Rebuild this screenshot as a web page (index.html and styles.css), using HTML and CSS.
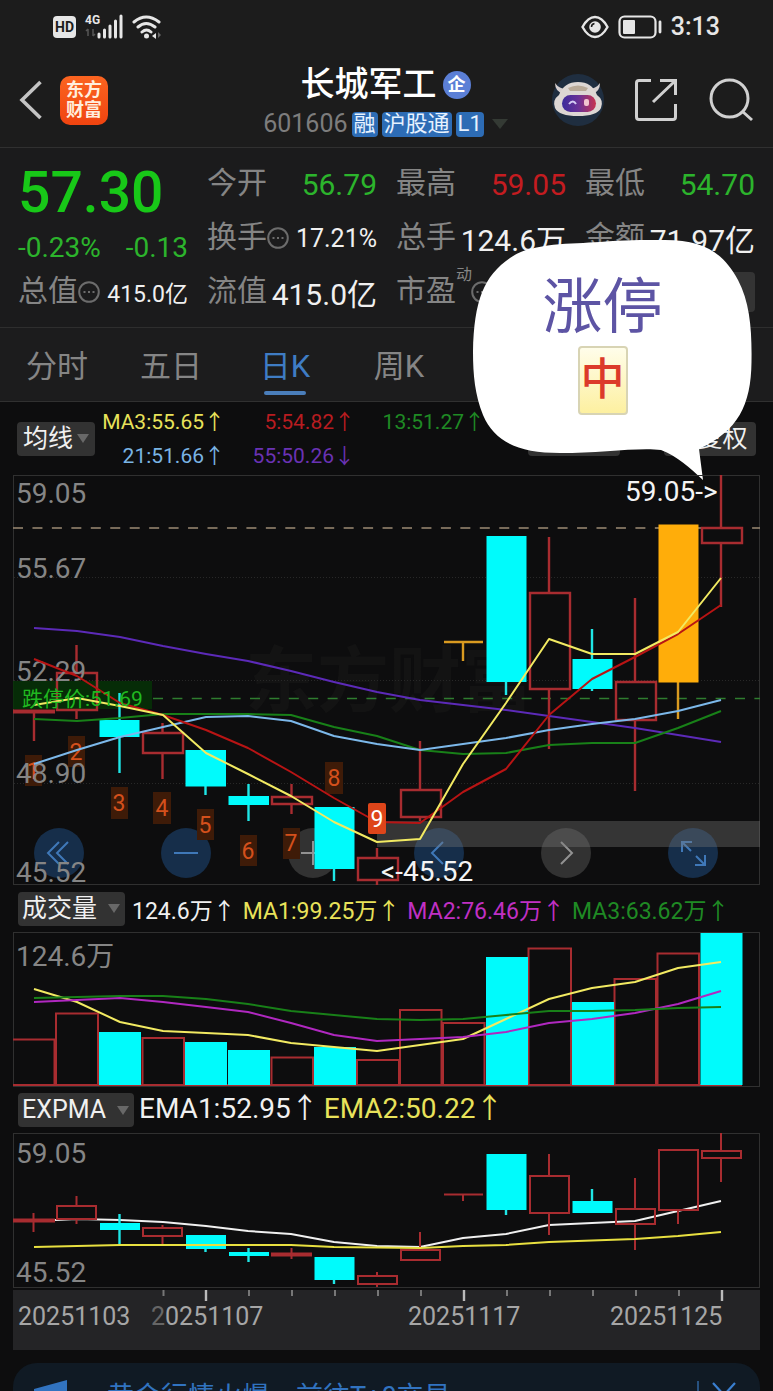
FILE: index.html
```html
<!DOCTYPE html>
<html lang="zh-CN">
<head>
<meta charset="utf-8">
<meta name="viewport" content="width=device-width, initial-scale=1">
<title>长城军工 601606</title>
<link rel="stylesheet" href="styles.css">
</head>
<body>
<div class="app">
  <div class="status">
    <div class="status-side">
      <span class="hd">HD</span>
      <svg width="42" height="30" viewBox="0 0 42 30" aria-hidden="true">
        <text x="1" y="12" class="net">4G</text>
        <path d="M4 17v7M2 19l2-2M9 17v7M11 22l-2 2" stroke="#555" stroke-width="1.500" fill="none"/>
        <path d="M15 22v3M20.500 18v7M26 14v11M31.500 9v16M37 4v21" stroke="#e6e6e6" stroke-width="3" stroke-linecap="round"/>
      </svg>
      <svg width="30" height="26" viewBox="0 0 30 26" fill="none" stroke="#e6e6e6" stroke-width="3" stroke-linecap="round" aria-hidden="true">
        <path d="M2 8Q14-2 27 8M6 13Q14 6 23 13M10 18Q14.500 14 19 18"/>
        <circle cx="14.500" cy="22" r="2.500" fill="#e6e6e6" stroke="none"/>
        <path d="M24 19v6l-4-3z" fill="#e6e6e6" stroke="none"/><path d="M26 18v6l3-3z" fill="#666" stroke="none"/>
      </svg>
    </div>
    <div class="status-side">
      <svg width="28" height="24" viewBox="0 0 28 24" fill="none" stroke="#e6e6e6" stroke-width="2.400" aria-hidden="true">
        <path d="M1.500 12Q7 2 14 2T26.500 12Q21 22 14 22T1.500 12Z"/><circle cx="14" cy="12" r="5.800" fill="#e6e6e6" stroke="none"/><path d="M10.500 12q0-3 3-3.500" stroke="#1c1c1c" stroke-width="1.500"/>
      </svg>
      <svg width="44" height="24" viewBox="0 0 44 24" fill="none" stroke="#e6e6e6" stroke-width="2.200" aria-hidden="true">
        <rect x="1.500" y="1.500" width="36" height="21" rx="5"/><rect x="5" y="5" width="12" height="14" rx="1" fill="#e6e6e6" stroke="none"/><path d="M42 7v10" stroke-width="2.800" stroke-linecap="round"/>
      </svg>
      <time class="clock">3:13</time>
    </div>
  </div>

  <header class="header">
    <div class="header-left">
      <button class="icon-btn" type="button" aria-label="返回">
        <svg width="24" height="40" viewBox="0 0 24 40" fill="none" stroke="#c4c4c4" stroke-width="3.600"><path d="M22.500 2L4 20l18.500 18"/></svg>
      </button>
      <a class="brand" href="#">东方<br>财富</a>
    </div>
    <div class="header-title">
      <h1>长城军工<span class="corp">企</span></h1>
      <p class="codes"><span class="code">601606</span><span class="tag">融</span><span class="tag">沪股通</span><span class="tag">L1</span><i class="caret caret-dim"></i></p>
    </div>
    <div class="header-right">
      <button class="icon-btn" type="button" aria-label="智能助手">
        <svg width="54" height="54" viewBox="0 0 54 54">
          <defs><linearGradient id="visor"><stop offset="0" stop-color="#3c2c9c"/><stop offset=".5" stop-color="#6b3196"/><stop offset="1" stop-color="#c83450"/></linearGradient></defs>
          <circle cx="27" cy="27" r="26" fill="#1f2e40"/>
          <path d="M4 10q0 9 9 11l3-5q-8 0-12-6zM49 10q0 9-8 11l-4-5q8 0 12-6z" fill="#d6cfcf"/>
          <path d="M8 22q5-13 19-13t19 13q7 5 4 13-4 8-23 8t-23-8q-3-8 4-13z" fill="#ddd7d4"/>
          <path d="M17 15q10-5 20 0l-2 3H19z" fill="#b9aa98"/>
          <rect x="11" y="22" width="34" height="17" rx="8.500" fill="url(#visor)"/>
          <path d="M18 31q4-5 7 0" fill="none" stroke="#d4ccf4" stroke-width="2"/><rect x="33" y="26" width="5" height="7" rx="2" fill="#f1c4cf"/>
        </svg>
      </button>
      <button class="icon-btn" type="button" aria-label="分享">
        <svg width="46" height="46" viewBox="0 0 46 46" fill="none" stroke="#d0d0d0" stroke-width="3"><path d="M18 3.500H6q-2.500 0-2.500 2.500v34q0 2.500 2.500 2.500h34q2.500 0 2.500-2.500V27M27 3.500h15.500V18M42 4L20 25"/></svg>
      </button>
      <button class="icon-btn" type="button" aria-label="搜索">
        <svg width="46" height="46" viewBox="0 0 46 46" fill="none" stroke="#d0d0d0" stroke-width="3"><circle cx="22.500" cy="21.500" r="18.500"/><path d="M35.500 34.500L45 43"/></svg>
      </button>
    </div>
  </header>

  <section class="quote" aria-label="行情">
    <div class="cell"><strong class="price">57.30</strong></div>
    <div class="cell"><span class="k">今开</span><span class="v down">56.79</span></div>
    <div class="cell"><span class="k">最高</span><span class="v up">59.05</span></div>
    <div class="cell"><span class="k">最低</span><span class="v down">54.70</span></div>

    <div class="cell change down"><span>-0.23%</span><span>-0.13</span></div>
    <div class="cell"><span class="k">换手</span><svg class="more" viewBox="0 0 22 22"><circle cx="11" cy="11" r="9.800"/><path d="M5.500 11h2M10 11h2M14.500 11h2"/></svg><span class="v v-mid">17.21%</span></div>
    <div class="cell"><span class="k">总手</span><span class="v">124.6万</span></div>
    <div class="cell"><span class="k">金额</span><span class="v">71.97亿</span></div>

    <div class="cell"><span class="k">总值</span><svg class="more" viewBox="0 0 22 22"><circle cx="11" cy="11" r="9.800"/><path d="M5.500 11h2M10 11h2M14.500 11h2"/></svg><span class="v v-small">415.0亿</span></div>
    <div class="cell"><span class="k">流值</span><span class="v">415.0亿</span></div>
    <div class="cell"><span class="k">市盈<sup>动</sup></span><svg class="more" viewBox="0 0 22 22"><circle cx="11" cy="11" r="9.800"/><path d="M5.500 11h2M10 11h2M14.500 11h2"/></svg></div>
    <div class="cell"><button class="expand" type="button" aria-label="展开更多"></button></div>
  </section>

  <nav class="tabs">
    <a href="#">分时</a><a href="#">五日</a><a class="active" href="#" aria-current="page">日K</a><a href="#">周K</a>
  </nav>

  <main class="charts">
    <div class="legend legend-ma">
      <button class="pick" type="button">均线<i class="caret"></i></button>
      <div class="ma">
        <span class="yellow">MA3:55.65↑</span><span class="red">5:54.82↑</span><span class="green">13:51.27↑</span>
        <span class="sky">21:51.66↑</span><span class="purple">55:50.26↓</span>
      </div>
      <div class="tools"><button class="pick tool" type="button" aria-label="画线"></button><button class="pick tool" type="button">前复权</button></div>
    </div>

    <div class="kline">
      <svg class="chart" viewBox="13 475 747 410" role="img" aria-label="日K线图">
        <rect class="frame" x="13.500" y="475.500" width="746" height="409"/>
        <text class="watermark" x="245" y="706">东方财富</text>
        <path class="grid" d="M14 577.500H760M14 680.500H760M14 783.500H760"/>
        <path d="M13 528H760" stroke="#9c8a74" stroke-width="1.600" stroke-dasharray="10 9.450"/>
        <rect x="13" y="681" width="139" height="28" fill="#063206" opacity=".85"/>
        <path d="M153 698.500H760" stroke="#2f7c2f" stroke-width="1.600" stroke-dasharray="10 9.400"/>
        <rect x="377" y="821" width="383" height="26" fill="#777" opacity=".38"/>
        <g class="badge">
          <rect x="25" y="755" width="17" height="31"/><rect x="68" y="736" width="17" height="31"/><rect x="111" y="787" width="17" height="32"/><rect x="153" y="792" width="18" height="32"/><rect x="197" y="809" width="17" height="31"/><rect x="240" y="835" width="17" height="31"/><rect x="283" y="828" width="17" height="31"/><rect x="325" y="762" width="18" height="32"/>
          <text x="33" y="779">1</text><text x="76" y="760">2</text><text x="119" y="811">3</text><text x="162" y="816">4</text><text x="205" y="833">5</text><text x="248" y="859">6</text><text x="291" y="851">7</text><text x="334" y="786">8</text>
        </g>
        <g class="hollow">
          <path d="M13 711.500H55" stroke-width="4"/>
          <path d="M34 712V741M76.500 645V673M76.500 710V719M162.500 723V733M162.500 753V779M291.500 784V796M291.500 805V814M377 848V858M377 880V885M420 741V789M420 817V821M549 537V593M549 690V749M635 598V682M635 720V791M721 475V527M721 543V607"/>
          <path d="M57 673h40v37H57zM143 733h40v20H143zM272 797h40v7H272zM358 858h40v22H358zM401 790h40v27H401zM530 593h40v96H530zM616 682h40v38H616zM702 528h40v15H702z"/>
        </g>
        <g class="solid"><path d="M119.500 693V773M205.500 786V795M248.500 784V821M334 868V881M506 681V695M592 629V691"/>
          <path class="body" d="M99.500 720h40v17h-40zM185.500 750h40.500v36.500h-40.500zM228.500 796h40.500v9h-40.500zM314.500 807h40v62h-40zM486.500 536h40v146h-40zM572.500 659h40v30h-40z"/></g>
        <path d="M444 642H483M463 642V661M678 682V719" stroke="#d99a20" stroke-width="2.400"/>
        <path d="M658.500 524.500h40v158h-40z" fill="#ffad0a"/>
        <g class="axis-label"><text x="16" y="503">59.05</text><text x="16" y="578">55.67</text><text x="16" y="681">52.29</text><text x="16" y="783">48.90</text><text x="16" y="882">45.52</text></g>
        <g class="lines">
          <polyline stroke="#5c2ab8" points="34,628 77,631 120,637 163,646 206,654 248,661 291,671 334,682 377,692 420,700 463,705 506,710 549,716 592,722 635,728 678,735 721,742"/>
          <polyline stroke="#188018" points="34,719 77,721 120,718 163,714 206,714 248,714 291,715 334,727 377,736 420,750 463,754 506,753 549,745 592,743 635,743 678,728 721,711"/>
          <polyline stroke="#7cb8ea" points="34,764 77,750 120,737 163,727 206,717 248,716 291,721 334,736 377,744 420,750 463,744 506,738 549,730 592,724 635,719 678,711 721,700"/>
          <polyline stroke="#b81414" points="34,659 77,676 120,703 163,715 206,730 248,748 291,772 334,798 377,822 420,823 463,792 506,769 549,715 592,679 635,657 678,634 721,605"/>
          <polyline stroke="#f2ea62" points="34,705 77,698 120,706 163,715 206,753 248,774 291,796 334,822 377,842 420,839 463,764 506,703 549,639 592,654 635,654 678,632 721,578"/>
        </g>
        <text class="limit" x="22" y="706">跌停价:51.69</text>
        <rect x="368" y="803" width="18" height="31" rx="2" fill="#de451a"/><text x="377" y="827" class="nine">9</text>
        <g class="peak"><text x="625" y="501">59.05-&gt;</text><text x="381" y="881">&lt;-45.52</text></g>
      </svg>
      <div class="controls">
        <button type="button" aria-label="最早"><svg viewBox="0 0 50 50"><path d="M25 14L14 25l11 11M34 14L23 25l11 11"/></svg></button>
        <button type="button" aria-label="缩小"><svg viewBox="0 0 50 50"><path d="M13 25H37"/></svg></button>
        <button type="button" class="gray" aria-label="放大"><svg viewBox="0 0 50 50"><path d="M13 25H37M25 13V37"/></svg></button>
        <button type="button" aria-label="向左"><svg viewBox="0 0 50 50"><path d="M29 14L18 25l11 11"/></svg></button>
        <button type="button" class="gray" aria-label="向右"><svg viewBox="0 0 50 50"><path d="M20 14L31 25 20 36"/></svg></button>
        <button type="button" aria-label="全屏"><svg viewBox="0 0 50 50"><path d="M14 24V14H24M14 14L23 23M37 27V37H27M37 37L28 28"/></svg></button>
      </div>
    </div>

    <div class="legend legend-vol">
      <button class="pick wide" type="button">成交量<i class="caret"></i></button>
      <span>124.6万↑</span><span class="yellow">MA1:99.25万↑</span><span class="magenta">MA2:76.46万↑</span><span class="green">MA3:63.62万↑</span>
    </div>
    <svg class="chart" viewBox="13 932 747 155" role="img" aria-label="成交量图">
      <rect class="frame" x="13.500" y="932.500" width="746" height="154"/>
      <text class="axis-label" x="16" y="966">124.6万</text>
      <path class="hollow thin" d="M13 1039.500H54.500V1085H13M56 1085V1013.500H98V1085zM142.500 1085V1038H184V1085zM271.500 1085V1057.500H313V1085zM357 1085V1060H399V1085zM400 1085V1010H441.500V1085zM443 1085V1023H484.500V1085zM528.500 1085V948.500H571V1085zM614.500 1085V979H656V1085zM657.500 1085V953.500H699V1085zM13 1085H742"/>
      <path class="body" d="M99 1032h42v53H99zM185 1042h42v43h-42zM228 1050h42v35h-42zM314 1047h42v38h-42zM486 957h42v128h-42zM572 1002h42v83h-42zM700.500 933h42v152h-42z"/>
      <g class="lines">
        <polyline stroke="#f2ea62" points="34,989 77,1002 120,1022 163,1031 206,1033 248,1035 291,1043 334,1047 377,1051 420,1045 463,1039 506,1019 549,999 592,988 635,982 678,968 721,962"/>
        <polyline stroke="#b028c0" points="34,1002 77,1000 120,998 163,1002 206,1007 248,1012 291,1023 334,1035 377,1041 420,1039 463,1037 506,1032 549,1023 592,1019 635,1013 678,1004 721,991"/>
        <polyline stroke="#188018" points="34,998 77,997 120,996 163,996 206,999 248,1004 291,1011 334,1015 377,1019 420,1020 463,1019 506,1015 549,1011 592,1011 635,1010 678,1008 721,1007"/>
      </g>
    </svg>

    <div class="legend legend-exp">
      <button class="pick wide" type="button">EXPMA<i class="caret"></i></button>
      <span>EMA1:52.95↑</span><span class="yellow">EMA2:50.22↑</span>
    </div>
    <svg class="chart" viewBox="13 1133 747 155" role="img" aria-label="EXPMA图">
      <rect class="frame" x="13.500" y="1133.500" width="746" height="154"/>
      <g class="axis-label"><text x="16" y="1163">59.05</text><text x="16" y="1282">45.52</text></g>
      <g class="lines"><polyline stroke="#f0f0f0" points="34,1221 77,1219 120,1220 163,1222 206,1226 248,1231 291,1234 334,1242 377,1246 420,1247 463,1238 506,1234 549,1225 592,1223 635,1221 678,1211 721,1201"/></g>
      <g class="hollow thin">
        <path d="M13 1220.500H55M271 1254.500H312" stroke-width="4"/>
        <path d="M33.500 1213V1232M76.500 1196V1206M76.500 1219V1224M162.500 1225V1228M162.500 1236V1245M291.500 1248V1259M377 1272V1276M377 1284V1287M420 1232V1250M444 1194.500H483M463 1194V1201M549 1154V1176M549 1213V1235M635 1178V1209M635 1224V1250M678 1210V1224M721 1133V1151M721 1158V1182"/>
        <path d="M57 1206h39v13H57zM143 1228h39v8h-39zM358 1276h39v8h-39zM401 1250h39v10h-39zM530 1176h39v37h-39zM616 1209h39v15h-39zM659 1150h39v60h-39zM702 1151h39v7h-39z"/>
      </g>
      <g class="solid"><path d="M119.500 1214V1244M205.500 1248V1252M248.500 1248V1262M334 1279V1284M506 1208V1215M592 1189V1201"/>
        <path class="body" d="M100 1223h40v7h-40zM186 1235h40v14h-40zM229 1252h40v4h-40zM314.500 1257h40v23h-40zM486.500 1154h40v56h-40zM572.500 1201h40v12h-40z"/></g>
      <g class="lines"><polyline stroke="#e8e040" points="34,1247 77,1246 120,1245 206,1245 291,1245 334,1247 420,1248 463,1246 506,1245 549,1242 635,1239 678,1236 721,1232"/></g>
    </svg>
    <svg class="chart axis" viewBox="13 1290 747 60" role="img" aria-label="日期">
      <path d="M163.500 1290v6M249 1290v6M292 1290v6M335 1290v6M378 1290v6M421 1290v6M507 1290v6M550 1290v6M593 1290v6M636 1290v6M679 1290v6" stroke="#777" stroke-width="2"/>
      <path d="M206 1290v11M464 1290v11M722 1290v11" stroke="#bbb" stroke-width="2.400"/>
      <text x="18" y="1325">20251103</text><text x="151" y="1325"><tspan fill="#666">2</tspan>0251107</text><text x="408" y="1325">20251117</text><text x="610" y="1325">20251125</text>
    </svg>
  </main>

  <aside class="promo">
    <svg width="36" height="30" viewBox="0 0 36 30" fill="#3173c0" aria-hidden="true"><path d="M1 9L34 0V30L20 24v6h-8v-8L1 18z"/></svg>
    <a href="#">黄金行情火爆，前往T+0交易</a>
    <button class="icon-btn close" type="button" aria-label="关闭"><svg width="24" height="28" viewBox="0 0 24 28" stroke="#3a7fd0" stroke-width="2.200"><path d="M1 2L23 26M23 2L1 26"/></svg></button>
  </aside>

  <div class="bubble">
    <svg class="bubble-shape" viewBox="473 240 279 240" aria-hidden="true"><path fill="#fff" d="M473 352C474 300 484 276 510 258C530 243 570 244 600 242C625 240 640 240 665 240C705 240 724 254 738 280C750 303 752 330 751.500 362C751 405 738 431 699 449L703 480C690 468 677 456 661 450C640 447 600 453 560 453C520 453 495 443 483 415C475 395 473 375 473 352Z"/></svg>
    <div class="bubble-text"><span>涨停</span><span class="tile">中</span></div>
  </div>
</div>
</body>
</html>
```
FILE: styles.css
```css
* { box-sizing: border-box; }
body { margin: 0; background: #0d0d0e; color: #f0f0f0; font-family: Roboto, "Noto Sans CJK SC", sans-serif; }
button { font: inherit; color: inherit; border: 0; padding: 0; background: none; }
a { color: inherit; text-decoration: none; }
h1, p { margin: 0; font-weight: 400; }
svg { display: block; flex: none; }

.app { position: relative; height: 100vh; overflow: hidden; }

.status { display: flex; justify-content: space-between; align-items: center; height: 53px; padding: 0 53px; background: #1c1c1c; }
.status-side { display: flex; align-items: center; gap: 9px; }
.status-side:first-child { gap: 6px; }
.hd { width: 23px; height: 22px; margin-right: 2px; border-radius: 4px; background: #e6e6e6; color: #1c1c1c; font-size: 14px; line-height: 22px; font-weight: 700; text-align: center; }
.net { font-size: 12px; font-weight: 700; fill: #e6e6e6; }
.clock { font-size: 25px; font-weight: 500; color: #e6e6e6; }

.header { display: grid; grid-template-columns: 1fr auto 1fr; align-items: center; height: 95px; padding: 0 20px 0 18px; background: #1c1c1c; border-bottom: 1px solid #303030; }
.header-left, .header-right { display: flex; align-items: center; }
.header-left { gap: 18px; }
.header-right { justify-content: flex-end; gap: 28px; }
.brand { width: 48px; height: 49px; padding-top: 4px; border-radius: 10px; background: linear-gradient(#fb6420, #f04410); color: #ffeedd; font-size: 18px; line-height: 20px; font-weight: 700; text-align: center; }
.header-title { display: flex; flex-direction: column; align-items: center; padding-top: 5px; }
.header-title h1 { display: flex; align-items: center; gap: 6px; font-size: 34px; line-height: 43px; font-weight: 500; color: #fff; }
.corp { width: 28px; height: 28px; border-radius: 50%; background: #5b7fd6; font-size: 18px; line-height: 27px; font-weight: 700; text-align: center; }
.codes { display: flex; align-items: center; gap: 4px; font-size: 25px; line-height: 36px; color: #7d7d7d; }
.tag { height: 25px; padding: 0 2px; border-radius: 4px; background: #2d6cb5; color: #e6f2ff; font-size: 22px; line-height: 24px; }
.caret { display: inline-block; border: 6px solid transparent; border-top: 9px solid #686868; border-bottom: 0; }
.caret-dim { margin-left: 4px; border-width: 8px; border-top: 10px solid #343a34; border-bottom: 0; }

.quote { display: grid; grid-template-columns: repeat(4, 1fr); grid-auto-rows: 54px; column-gap: 19px; height: 180px; padding: 9px 18px 0; background: #1b1b1c; border-bottom: 1px solid #2e2e2e; }
.cell { display: flex; align-items: center; min-width: 0; font-size: 30px; white-space: nowrap; }
.k { position: relative; color: #858585; line-height: 44px; padding-bottom: 2px; }
.k sup { position: absolute; left: 100%; top: -4px; font-size: 16px; line-height: 20px; }
.v { margin-left: auto; }
.v-mid { font-size: 25px; }
.v-small { font-size: 23px; }
.more { width: 22px; height: 22px; fill: none; stroke: #6c6c6c; stroke-width: 2; }
.k:has(sup) + .more { margin-left: 15px; }
.price { padding-top: 17px; font-size: 57px; line-height: 57px; font-weight: 500; color: #18c818; }
.change { justify-content: space-between; padding-top: 18px; font-size: 28px; }
.down { color: #2cb42c; }
.up { color: #c41c20; }
.expand { width: 90px; height: 40px; margin-left: auto; border-radius: 4px; background: #343434; }

.tabs { display: flex; height: 74px; background: #1c1c1d; border-bottom: 1px solid #303030; }
.tabs a { flex: 0 0 114px; position: relative; font-size: 31px; line-height: 77px; text-align: center; color: #858585; }
.tabs .active { color: #3f7cc4; }
.tabs .active::after { content: ""; position: absolute; left: 36px; right: 36px; bottom: 6px; height: 4px; border-radius: 2px; background: #4a7ebb; }

.charts { padding: 0 13px; }
.legend { display: flex; align-items: center; white-space: nowrap; }
.legend-ma { height: 73px; padding: 0 4px; }
.legend-vol { height: 47px; padding-left: 5px; gap: 7px; font-size: 23px; }
.legend-exp { height: 46px; padding-left: 5px; gap: 5px; font-size: 28px; line-height: 40px; }
.legend-exp span { padding-bottom: 2px; }
.pick { display: flex; align-items: center; gap: 4px; height: 34px; padding: 0 6px; border-radius: 4px; background: #323232; font-size: 25px; line-height: 34px; }
.wide { gap: 11px; padding: 0 5px 0 4px; }
.ma { display: grid; grid-template-columns: 130px 130px 130px; line-height: 34px; font-size: 21px; text-align: right; }
.tools { display: flex; gap: 44px; margin-left: auto; }
.tool { width: 92px; justify-content: center; }
.yellow { color: #e8e25a; }
.red { color: #b81c20; }
.green { color: #1f8a24; }
.sky { color: #7ab4e4; }
.purple { color: #6a32b4; }
.magenta { color: #c030c4; }

.kline { position: relative; }
.chart { width: 100%; height: auto; overflow: visible; }
.kline .chart { position: relative; z-index: 1; pointer-events: none; }
.frame { fill: none; stroke: #303030; }
.grid { stroke: #282828; stroke-dasharray: 1 2; }
.watermark { font-size: 72px; font-weight: 700; fill: #131313; }
.axis-label { font-size: 28px; fill: #858585; }
.hollow { fill: none; stroke: #a82c30; stroke-width: 2.4; }
.thin { stroke-width: 2; }
.solid { stroke: #1fe6e6; stroke-width: 2.4; }
.body { fill: #00fbfc; stroke: none; }
.lines { fill: none; stroke-width: 2; stroke-linejoin: round; }
.badge rect { fill: #3e1b08; }
.badge text, .nine { font-size: 23px; text-anchor: middle; fill: #d4501c; }
.nine { fill: #fff; }
.limit { font-size: 21px; fill: #20b820; }
.peak { font-size: 28px; fill: #f4f4f4; }
.controls { position: absolute; left: 21px; right: 42px; bottom: 7px; display: flex; justify-content: space-between; }
.controls button { width: 50px; height: 50px; border-radius: 50%; background: #162e4a; }
.controls svg { fill: none; stroke: #3f78b8; stroke-width: 2; }
.controls .gray { background: #323232; }
.controls .gray svg { stroke: #929292; }
.axis { margin-top: 2px; background: #242426; font-size: 25px; fill: #a6a6a6; }

.promo { display: flex; align-items: center; height: 63px; margin: 13px 13px 0; padding: 0 24px 0 20px; border-radius: 24px; background: #101a24; color: #3173c0; font-size: 27px; white-space: nowrap; }
.promo a { margin-left: 38px; }
.close { margin-left: auto; padding-left: 13px; border-left: 2px solid #27517f; }

.bubble { position: absolute; top: 240px; right: 21px; width: 279px; }
.bubble-shape { width: 100%; }
.bubble-text { position: absolute; top: 30px; left: 0; right: 20px; display: flex; flex-direction: column; align-items: center; color: #5d54a4; font-size: 60px; line-height: 76px; }
.tile { width: 50px; height: 69px; border: 2px solid #d8d4b4; border-radius: 4px; background: linear-gradient(#fffdea, #fdf0a0); color: #dc3a2a; font-size: 44px; line-height: 64px; font-weight: 500; text-align: center; }
```
